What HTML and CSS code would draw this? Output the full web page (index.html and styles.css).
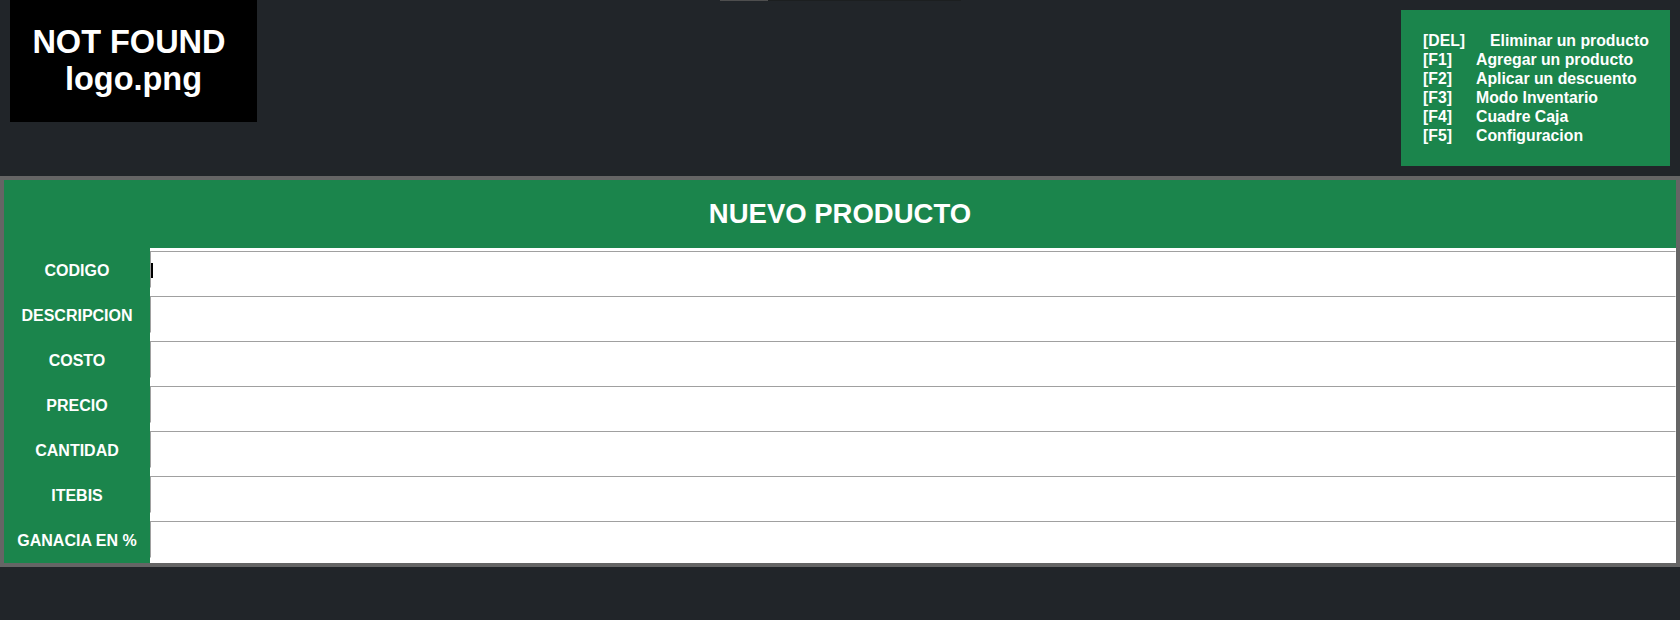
FILE: index.html
```html
<!DOCTYPE html>
<html lang="es">
<head>
<meta charset="utf-8">
<title>Nuevo producto</title>
<link rel="stylesheet" href="styles.css">
</head>
<body>
<header class="top">
  <div class="logo">
    <span>NOT FOUND&nbsp;</span>
    <span>logo.png</span>
  </div>
  <div class="progress"><div class="progress-fill" style="width:48px"></div></div>
  <div class="shortcuts">
    <div class="sc-row"><span class="key">[DEL]</span><span class="desc desc-del">Eliminar un producto</span></div>
    <div class="sc-row"><span class="key">[F1]</span><span class="desc">Agregar un producto</span></div>
    <div class="sc-row"><span class="key">[F2]</span><span class="desc">Aplicar un descuento</span></div>
    <div class="sc-row"><span class="key">[F3]</span><span class="desc">Modo Inventario</span></div>
    <div class="sc-row"><span class="key">[F4]</span><span class="desc">Cuadre Caja</span></div>
    <div class="sc-row"><span class="key">[F5]</span><span class="desc">Configuracion</span></div>
  </div>
</header>
<main class="panel">
  <h1 class="panel-title">NUEVO PRODUCTO</h1>
  <div class="form">
    <label class="lbl" for="f-codigo">CODIGO</label>
    <div class="cell"><input id="f-codigo" class="inp" type="text"><span class="caret"></span></div>
    <label class="lbl" for="f-desc">DESCRIPCION</label>
    <div class="cell"><input id="f-desc" class="inp" type="text"></div>
    <label class="lbl" for="f-costo">COSTO</label>
    <div class="cell"><input id="f-costo" class="inp" type="text"></div>
    <label class="lbl" for="f-precio">PRECIO</label>
    <div class="cell"><input id="f-precio" class="inp" type="text"></div>
    <label class="lbl" for="f-cant">CANTIDAD</label>
    <div class="cell"><input id="f-cant" class="inp" type="text"></div>
    <label class="lbl" for="f-itebis">ITEBIS</label>
    <div class="cell"><input id="f-itebis" class="inp" type="text"></div>
    <label class="lbl" for="f-gan">GANACIA EN %</label>
    <div class="cell"><input id="f-gan" class="inp" type="text"></div>
  </div>
</main>
</body>
</html>
```
FILE: styles.css
```css
* { box-sizing: border-box; }
html, body { margin: 0; padding: 0; }
body {
  background: #212529;
  font-family: "Liberation Sans", Arial, sans-serif;
  font-weight: bold;
  color: #fff;
  width: 1680px;
  height: 620px;
  overflow: hidden;
}
.top {
  height: 176px;
  display: grid;
  grid-template-columns: 1fr auto 1fr;
  align-items: start;
}
.logo {
  margin-left: 10px;
  width: 247px;
  height: 122px;
  background: #000;
  display: flex;
  flex-direction: column;
  align-items: center;
  justify-content: center;
  font-size: 32.5px;
  line-height: 37px;
  justify-self: start;
}
.progress {
  width: 241px;
  height: 1px;
  background: #1c1f20;
}
.progress-fill {
  height: 1px;
  background: #4e4e4e;
}
.shortcuts {
  justify-self: end;
  margin-top: 10px;
  margin-right: 10px;
  width: 269px;
  height: 156px;
  background: #1b854c;
  padding: 21px 0 0 22px;
  font-size: 15.8px;
  line-height: 19px;
}
.sc-row { display: flex; white-space: nowrap; }
.key { width: 53px; flex: none; }
.desc-del { margin-left: 14px; }
.panel {
  width: 1680px;
  height: 391px;
  border: 4px solid #656565;
  background: #1b854c;
}
.panel-title {
  margin: 0;
  height: 68px;
  display: flex;
  align-items: center;
  justify-content: center;
  font-size: 27.5px;
  font-weight: bold;
  padding-bottom: 1px;
}
.form {
  display: grid;
  grid-template-columns: 146px 1fr;
  grid-auto-rows: 45px;
}
.lbl {
  display: flex;
  align-items: center;
  justify-content: center;
  font-size: 16px;
  white-space: nowrap;
}
.cell {
  position: relative;
  background: #fff;
  padding: 3px 0 5px 0;
}
.inp {
  display: block;
  width: 100%;
  height: 37px;
  margin: 0;
  padding: 0 4px;
  border: 1px solid;
  border-color: #a0a0a0 #fff #fff #a0a0a0;
  background: #fff;
  outline: none;
  font-family: "Liberation Sans", Arial, sans-serif;
  font-size: 16px;
}
.caret {
  position: absolute;
  left: 1px;
  top: 15px;
  width: 2px;
  height: 15px;
  background: #000;
}
```
